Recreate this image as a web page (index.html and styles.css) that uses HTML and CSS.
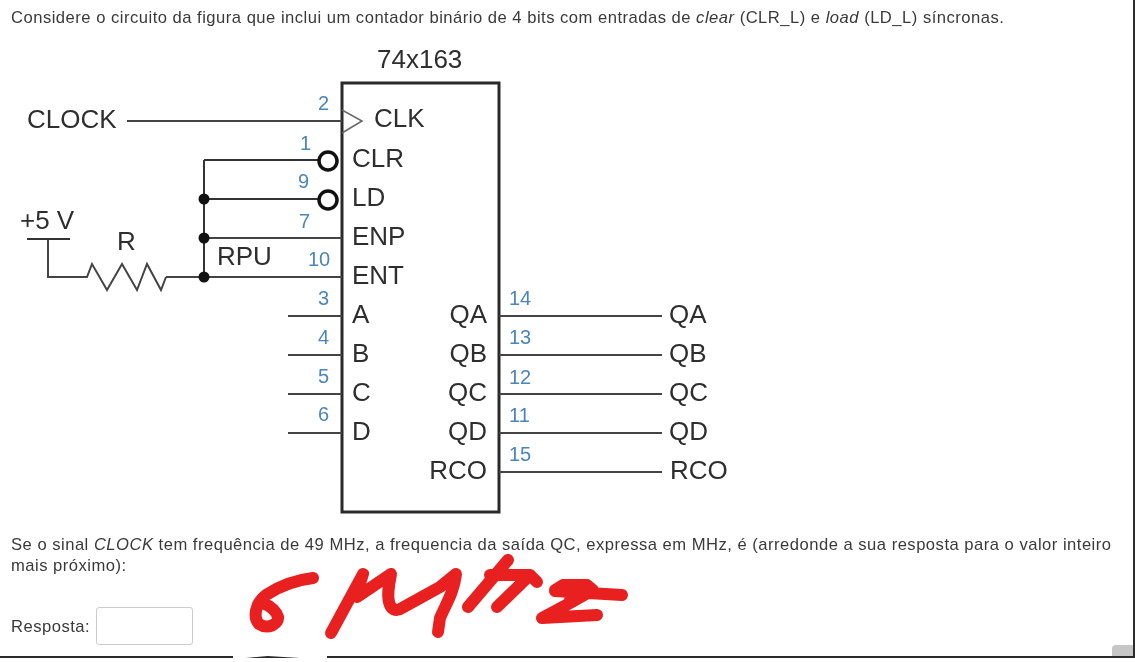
FILE: index.html
```html
<!DOCTYPE html>
<html lang="pt">
<head>
    <meta charset="UTF-8">
    <meta name="viewport" content="width=device-width, initial-scale=1.0">
    <title>Contador 74x163</title>
    <link rel="stylesheet" href="styles.css">
</head>
<body>
    <div class="sheet">
        <p class="intro">Considere o circuito da figura que inclui um contador binário de 4 bits com entradas de <em>clear</em> (CLR_L) e <em>load</em> (LD_L) síncronas.</p>

        <svg class="circuit" viewBox="0 40 760 482" width="760" height="482">
            <!-- chip -->
            <rect class="chip" x="342" y="83" width="157" height="429"/>
            <text class="lbl" x="377" y="68">74x163</text>
            <path class="thin" d="M342 110 L362 121 L342 133"/>

            <!-- wires -->
            <path class="wire" d="M127 121H342"/>
            <path class="wire strong" d="M204 160H318M204 199H318M204 160V277"/>
            <path class="wire" d="M204 238H342M166 277H342"/>
            <path class="wire" d="M48 239V277H87L92 264L107 290L122 264L137 290L147 264L161 290L166 277"/>
            <path class="wire strong" d="M27 239H70"/>
            <path class="wire" d="M288 316H342M288 355H342M288 394H342M288 433H342"/>
            <path class="wire" d="M499 316H662M499 355H662M499 394H662M499 433H662M499 472H662"/>

            <circle class="bubble" cx="328" cy="161" r="9"/>
            <circle class="bubble" cx="328" cy="200" r="9"/>
            <circle class="dot" cx="204" cy="199" r="5.5"/>
            <circle class="dot" cx="204" cy="238" r="5.5"/>
            <circle class="dot" cx="204" cy="277" r="5.5"/>

            <!-- signal names -->
            <text class="lbl" x="27" y="128">CLOCK</text>
            <text class="lbl" x="20" y="229">+5 V</text>
            <text class="lbl" x="117" y="250">R</text>
            <text class="lbl" x="217" y="265">RPU</text>
            <text class="lbl" x="374" y="127">CLK</text>
            <text class="lbl" x="352" y="167">CLR</text>
            <text class="lbl" x="352" y="206">LD</text>
            <text class="lbl" x="352" y="245">ENP</text>
            <text class="lbl" x="352" y="284">ENT</text>
            <text class="lbl" x="352" y="323">A</text>
            <text class="lbl" x="352" y="362">B</text>
            <text class="lbl" x="352" y="401">C</text>
            <text class="lbl" x="352" y="440">D</text>
            <text class="lbl end" x="487" y="323">QA</text>
            <text class="lbl end" x="487" y="362">QB</text>
            <text class="lbl end" x="487" y="401">QC</text>
            <text class="lbl end" x="487" y="440">QD</text>
            <text class="lbl end" x="487" y="479">RCO</text>
            <text class="lbl" x="669" y="323">QA</text>
            <text class="lbl" x="669" y="362">QB</text>
            <text class="lbl" x="669" y="401">QC</text>
            <text class="lbl" x="669" y="440">QD</text>
            <text class="lbl" x="670" y="479">RCO</text>

            <!-- pin numbers -->
            <text class="pin" x="318" y="110">2</text>
            <text class="pin" x="300" y="150">1</text>
            <text class="pin" x="298" y="188">9</text>
            <text class="pin" x="299" y="228">7</text>
            <text class="pin" x="308" y="266">10</text>
            <text class="pin" x="318" y="305">3</text>
            <text class="pin" x="318" y="344">4</text>
            <text class="pin" x="318" y="383">5</text>
            <text class="pin" x="318" y="421">6</text>
            <text class="pin" x="509" y="305">14</text>
            <text class="pin" x="509" y="344">13</text>
            <text class="pin" x="509" y="384">12</text>
            <text class="pin" x="509" y="422">11</text>
            <text class="pin" x="509" y="461">15</text>
        </svg>

        <p class="question">Se o sinal <em>CLOCK</em> tem frequência de 49 MHz, a frequencia da saída QC, expressa em MHz, é (arredonde a sua resposta para o valor inteiro mais próximo):</p>

        <div class="answer">
            <label for="resposta">Resposta:</label>
            <input id="resposta" type="text">
        </div>

        <div class="corner"></div>
    </div>

    <div class="rule">
        <span class="rule-left"></span>
        <span class="rule-wedge"></span>
        <span class="rule-right"></span>
    </div>

    <!-- handwritten answer on top of the page -->
    <svg class="scribble" viewBox="0 0 1135 662" width="1135" height="662">
        <path d="M313 578C296 580 278 587 266 595C255 603 253 618 259 624C268 630 279 624 278 617C276 610 270 606 263 603"/>
        <path d="M331 633L363 574C360 582 358 590 357 597L391 574C389 584 387 594 389 602C391 610 396 612 402 608L440 587L456 574C454 592 446 604 440 618L438 632"/>
        <path d="M468 607L508 560M490 575H530L537 582M497 607L530 575"/>
        <path d="M555 590L563 585H587L593 590L570 603L542 618L597 615M555 591L622 595M570 598L590 592"/>
    </svg>
</body>
</html>
```

FILE: styles.css
```css
body {
    font-family: "Liberation Sans", Arial, sans-serif;
    font-size: 16.6px;
    letter-spacing: 0.49px;
    line-height: 21px;
    color: #3a3a3a;
    background-color: #fff;
    margin: 0;
    padding: 0;
}
.sheet {
    position: relative;
    box-sizing: border-box;
    width: 1135px;
    height: 656px;
    padding: 7px 18px 0 11px;
    border-right: 2px solid #2b2b2b;
}
p {
    margin: 0;
}
.intro {
    height: 33px;
    filter: blur(0.4px);
}
.circuit {
    display: block;
    margin-left: -11px;
    letter-spacing: 0;
    filter: blur(0.6px);
}
.chip {
    fill: #fff;
    stroke: #2a2a2a;
    stroke-width: 3;
}
.wire {
    fill: none;
    stroke: #444;
    stroke-width: 2;
}
.wire.strong {
    stroke: #333;
}
.thin {
    fill: none;
    stroke: #666;
    stroke-width: 1.5;
}
.bubble {
    fill: #fff;
    stroke: #111;
    stroke-width: 3.5;
}
.dot {
    fill: #111;
}
.lbl {
    font-size: 26px;
    fill: #2e2e2e;
}
.end {
    text-anchor: end;
}
.pin {
    font-size: 20px;
    fill: #4a86b8;
}
.question {
    margin-top: 12px;
    filter: blur(0.4px);
}
.answer {
    display: flex;
    align-items: center;
    gap: 6px;
    margin-top: 31px;
}
.answer label {
    filter: blur(0.4px);
}
.answer input {
    box-sizing: border-box;
    width: 97px;
    height: 38px;
    padding: 0 6px;
    background: #fff;
    border: 1px solid #ccc;
    border-radius: 3px;
}
.corner {
    position: absolute;
    right: 0;
    bottom: 0;
    width: 21px;
    height: 11px;
    background-color: #c6c6c6;
    border-top-left-radius: 4px;
}
.rule {
    display: flex;
    height: 2px;
}
.rule span {
    display: block;
    background-color: #2b2b2b;
}
.rule-left {
    width: 233px;
}
.rule-wedge {
    width: 54px;
    margin-left: 13px;
    clip-path: polygon(0 100%, 40% 0, 100% 100%);
}
.rule-right {
    flex: 1;
    margin-left: 27px;
}
.scribble {
    position: absolute;
    left: 0;
    top: 0;
    pointer-events: none;
}
.scribble path {
    fill: none;
    stroke: #e8201f;
    stroke-width: 12;
    stroke-linecap: round;
    stroke-linejoin: round;
}
```
